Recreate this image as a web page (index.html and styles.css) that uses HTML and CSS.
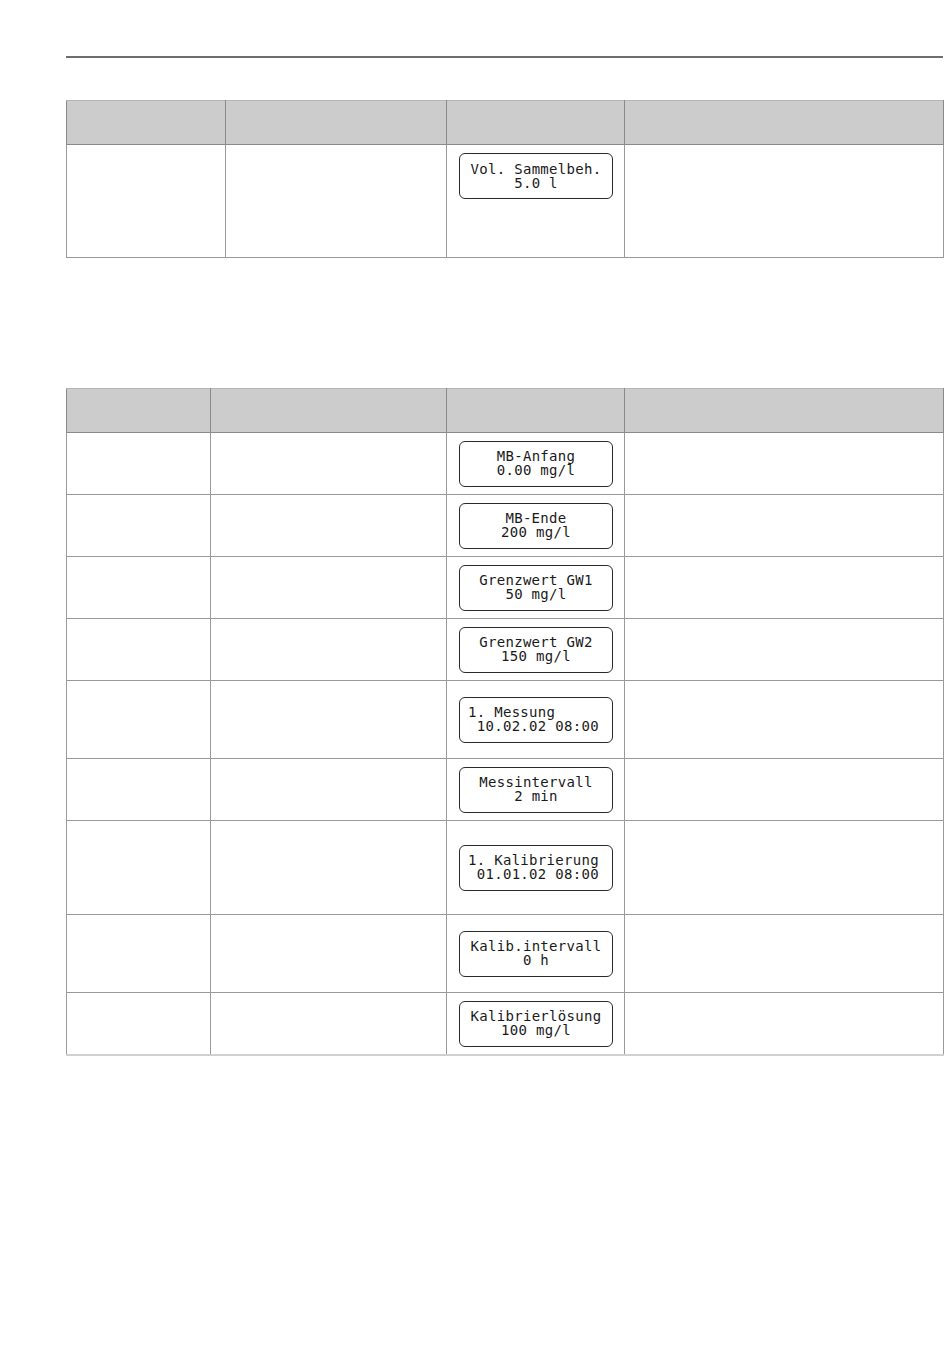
FILE: index.html
```html
<!DOCTYPE html>
<html lang="de">
<head>
<meta charset="utf-8">
<title>Parameter</title>
<link rel="stylesheet" href="styles.css">
</head>
<body>
<div class="page">
  <div class="rule"></div>

  <table class="grid grid-1">
    <colgroup><col class="c1a"><col class="c2a"><col class="c3"><col class="c4"></colgroup>
    <thead><tr class="head"><th></th><th></th><th></th><th></th></tr></thead>
    <tbody>
      <tr class="r-top"><td></td><td></td><td class="lcd-cell"><div class="lcd"><span class="ln">Vol. Sammelbeh.</span><span class="ln">5.0 l</span></div></td><td></td></tr>
    </tbody>
  </table>

  <table class="grid grid-2">
    <colgroup><col class="c1b"><col class="c2b"><col class="c3"><col class="c4"></colgroup>
    <thead><tr class="head"><th></th><th></th><th></th><th></th></tr></thead>
    <tbody>
      <tr class="h62"><td></td><td></td><td class="lcd-cell"><div class="lcd"><span class="ln">MB-Anfang</span><span class="ln">0.00 mg/l</span></div></td><td></td></tr>
      <tr class="h62"><td></td><td></td><td class="lcd-cell"><div class="lcd"><span class="ln">MB-Ende</span><span class="ln">200 mg/l</span></div></td><td></td></tr>
      <tr class="h62"><td></td><td></td><td class="lcd-cell"><div class="lcd"><span class="ln">Grenzwert GW1</span><span class="ln">50 mg/l</span></div></td><td></td></tr>
      <tr class="h62"><td></td><td></td><td class="lcd-cell"><div class="lcd"><span class="ln">Grenzwert GW2</span><span class="ln">150 mg/l</span></div></td><td></td></tr>
      <tr class="h78"><td></td><td></td><td class="lcd-cell"><div class="lcd wide"><span class="ln">1. Messung</span><span class="ln"> 10.02.02 08:00</span></div></td><td></td></tr>
      <tr class="h62"><td></td><td></td><td class="lcd-cell"><div class="lcd"><span class="ln">Messintervall</span><span class="ln">2 min</span></div></td><td></td></tr>
      <tr class="h94"><td></td><td></td><td class="lcd-cell"><div class="lcd wide"><span class="ln">1. Kalibrierung</span><span class="ln"> 01.01.02 08:00</span></div></td><td></td></tr>
      <tr class="h78"><td></td><td></td><td class="lcd-cell"><div class="lcd"><span class="ln">Kalib.intervall</span><span class="ln">0 h</span></div></td><td></td></tr>
      <tr class="h63"><td></td><td></td><td class="lcd-cell"><div class="lcd"><span class="ln">Kalibrierlösung</span><span class="ln">100 mg/l</span></div></td><td></td></tr>
    </tbody>
  </table>
</div>
</body>
</html>
```

FILE: styles.css
```css
html, body {
  margin: 0;
  padding: 0;
  background: #ffffff;
  font-family: "DejaVu Sans", sans-serif;
}

.page {
  width: 877px;
  margin-left: 66px;
  padding-top: 56px;
}

.rule {
  height: 0;
  border-top: 2px solid #6e6e6e;
}

.grid {
  width: 877px;
  border-collapse: collapse;
  table-layout: fixed;
}

.grid-1 {
  margin-top: 42px;
}

.grid-2 {
  margin-top: 130px;
}

.c1a { width: 159px; }
.c2a { width: 221px; }
.c1b { width: 144px; }
.c2b { width: 236px; }
.c3 { width: 178px; }
.c4 { width: 319px; }

.grid th,
.grid td {
  padding: 0;
  border: 1px solid #9a9a9a;
}

.head th {
  height: 43px;
  background: #cccccc;
  border-color: #8a8a8a;
  border-top-color: #b5b5b5;
}

.grid-1 tbody td {
  height: 104px;
  vertical-align: top;
}

.grid-1 .lcd-cell {
  padding-top: 8px;
}

.grid-2 tbody td {
  vertical-align: middle;
}

.grid-2 tbody tr:last-child td {
  height: 61px;
  border-bottom: 2px solid #d0d0d0;
}

.h62 td { height: 61px; }
.h63 td { height: 62px; }
.h78 td { height: 77px; }
.h94 td { height: 93px; }

.lcd-cell {
  padding-left: 12px !important;
}

.lcd {
  box-sizing: border-box;
  width: 154px;
  height: 46px;
  border: 1px solid #2a2a2a;
  border-radius: 6px;
  display: flex;
  flex-direction: column;
  align-items: center;
  justify-content: center;
  font-family: "DejaVu Sans Mono", "Liberation Mono", monospace;
  font-size: 14px;
  line-height: 14px;
  letter-spacing: 0.3px;
  color: #1a1a1a;
  padding-bottom: 1px;
}

.lcd .ln {
  white-space: pre;
  display: block;
}

.lcd.wide {
  align-items: flex-start;
  padding-left: 8px;
}
```
